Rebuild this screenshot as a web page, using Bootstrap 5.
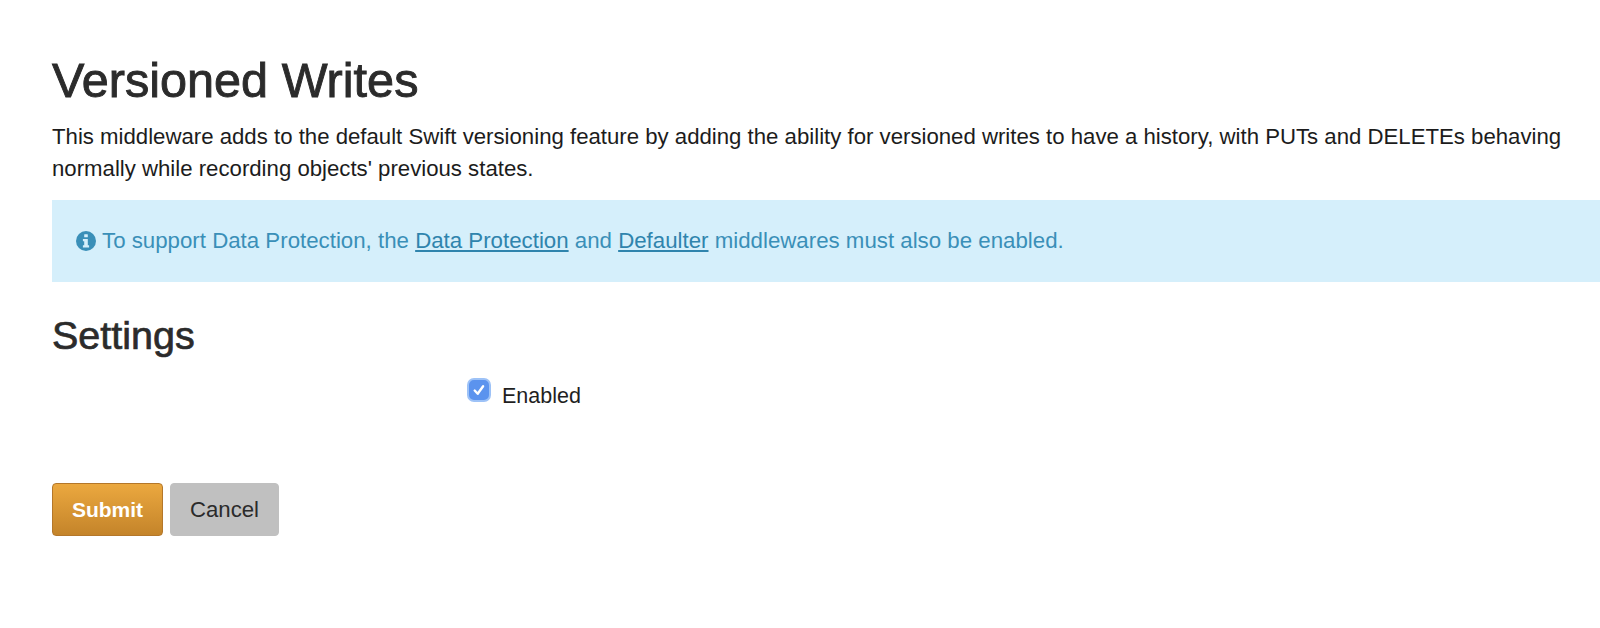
<!DOCTYPE html>
<html lang="en">
<head>
<meta charset="utf-8">
<title>Versioned Writes</title>
<link href="https://cdn.jsdelivr.net/npm/bootstrap@5.3.0/dist/css/bootstrap.min.css" rel="stylesheet">
<style>
html,body{height:100%;overflow:hidden}
body{font-family:"Liberation Sans",Arial,sans-serif;color:#1f1f1f;background:#fff;font-size:22px}
.page-wrap{padding:53px 0 0 52px}
.page-title{font-size:48.6px;font-weight:400;line-height:54px;color:#2b2b2b;margin:0 0 14px;-webkit-text-stroke:.9px #2b2b2b}
.intro{font-size:22.19px;line-height:32px;margin:0 30px 15px 0;color:#1c1c1c}
.note-box{background:#d5effb;color:#3a8fb8;height:82px;padding:0 24px;font-size:22.27px;margin:0 0 30px}
.note-box a{color:#2f84ad}
.note-icon{width:20px;height:20px;margin-right:6px;flex:none}
.sub-title{font-size:39.5px;font-weight:400;line-height:46px;color:#2b2b2b;margin:0 0 21px;-webkit-text-stroke:.7px #2b2b2b}
.setting-row{padding-left:415px;height:34px;gap:11px}
.tick{width:24px;height:24px;border-radius:7px;background:#5b93ee;border:2px solid #9dc2f7;margin-top:-12px;flex:none}
.setting-label{font-size:21.5px;line-height:24px;color:#1f1f1f}
.actions{margin-top:70px;gap:7px}
.btn-go,.btn-stop{height:53px;border-radius:4px;padding:0;display:flex;align-items:center;justify-content:center}
.btn-go{width:111px;font-size:21px;color:#fff;font-weight:700;background:linear-gradient(#eba83f,#c4842a);border:1px solid #b4772a}
.btn-stop{width:109px;font-size:22.2px;color:#2b2b2b;background:#c0c0c0;border:1px solid #c0c0c0}
.btn-go:hover{color:#fff;background:linear-gradient(#eba83f,#c4842a);border-color:#b4772a}
.btn-stop:hover{color:#2b2b2b;background:#c0c0c0;border-color:#c0c0c0}
</style>
</head>
<body>
<main class="page-wrap">
  <h1 class="page-title">Versioned Writes</h1>
  <p class="intro">This middleware adds to the default Swift versioning feature by adding the ability for versioned writes to have a history, with PUTs and DELETEs behaving normally while recording objects' previous states.</p>
  <div class="note-box d-flex align-items-center" role="alert">
    <svg class="note-icon" viewBox="0 0 20 20" aria-hidden="true"><circle cx="10" cy="10" r="10" fill="#3a8fb8"/><rect x="8.2" y="3.2" width="3.6" height="3" rx=".5" fill="#d5effb"/><path d="M6.9 8h4.9v6.2h1.3v2.3H6.9v-2.3h1.3v-3.9H6.9z" fill="#d5effb"/></svg>
    <span>To support Data Protection, the <a href="#">Data Protection</a> and <a href="#">Defaulter</a> middlewares must also be enabled.</span>
  </div>
  <h2 class="sub-title">Settings</h2>
  <div class="setting-row d-flex align-items-center">
    <span class="tick d-flex align-items-center justify-content-center">
      <svg width="14" height="14" viewBox="0 0 13 13" aria-hidden="true"><path d="M2.5 7l2.8 3 5-7" fill="none" stroke="#fff" stroke-width="2.2" stroke-linecap="round" stroke-linejoin="round"/></svg>
    </span>
    <span class="setting-label">Enabled</span>
  </div>
  <div class="actions d-flex">
    <button type="button" class="btn btn-go">Submit</button>
    <button type="button" class="btn btn-stop">Cancel</button>
  </div>
</main>
<script src="https://cdn.jsdelivr.net/npm/bootstrap@5.3.0/dist/js/bootstrap.bundle.min.js"></script>
</body>
</html>
